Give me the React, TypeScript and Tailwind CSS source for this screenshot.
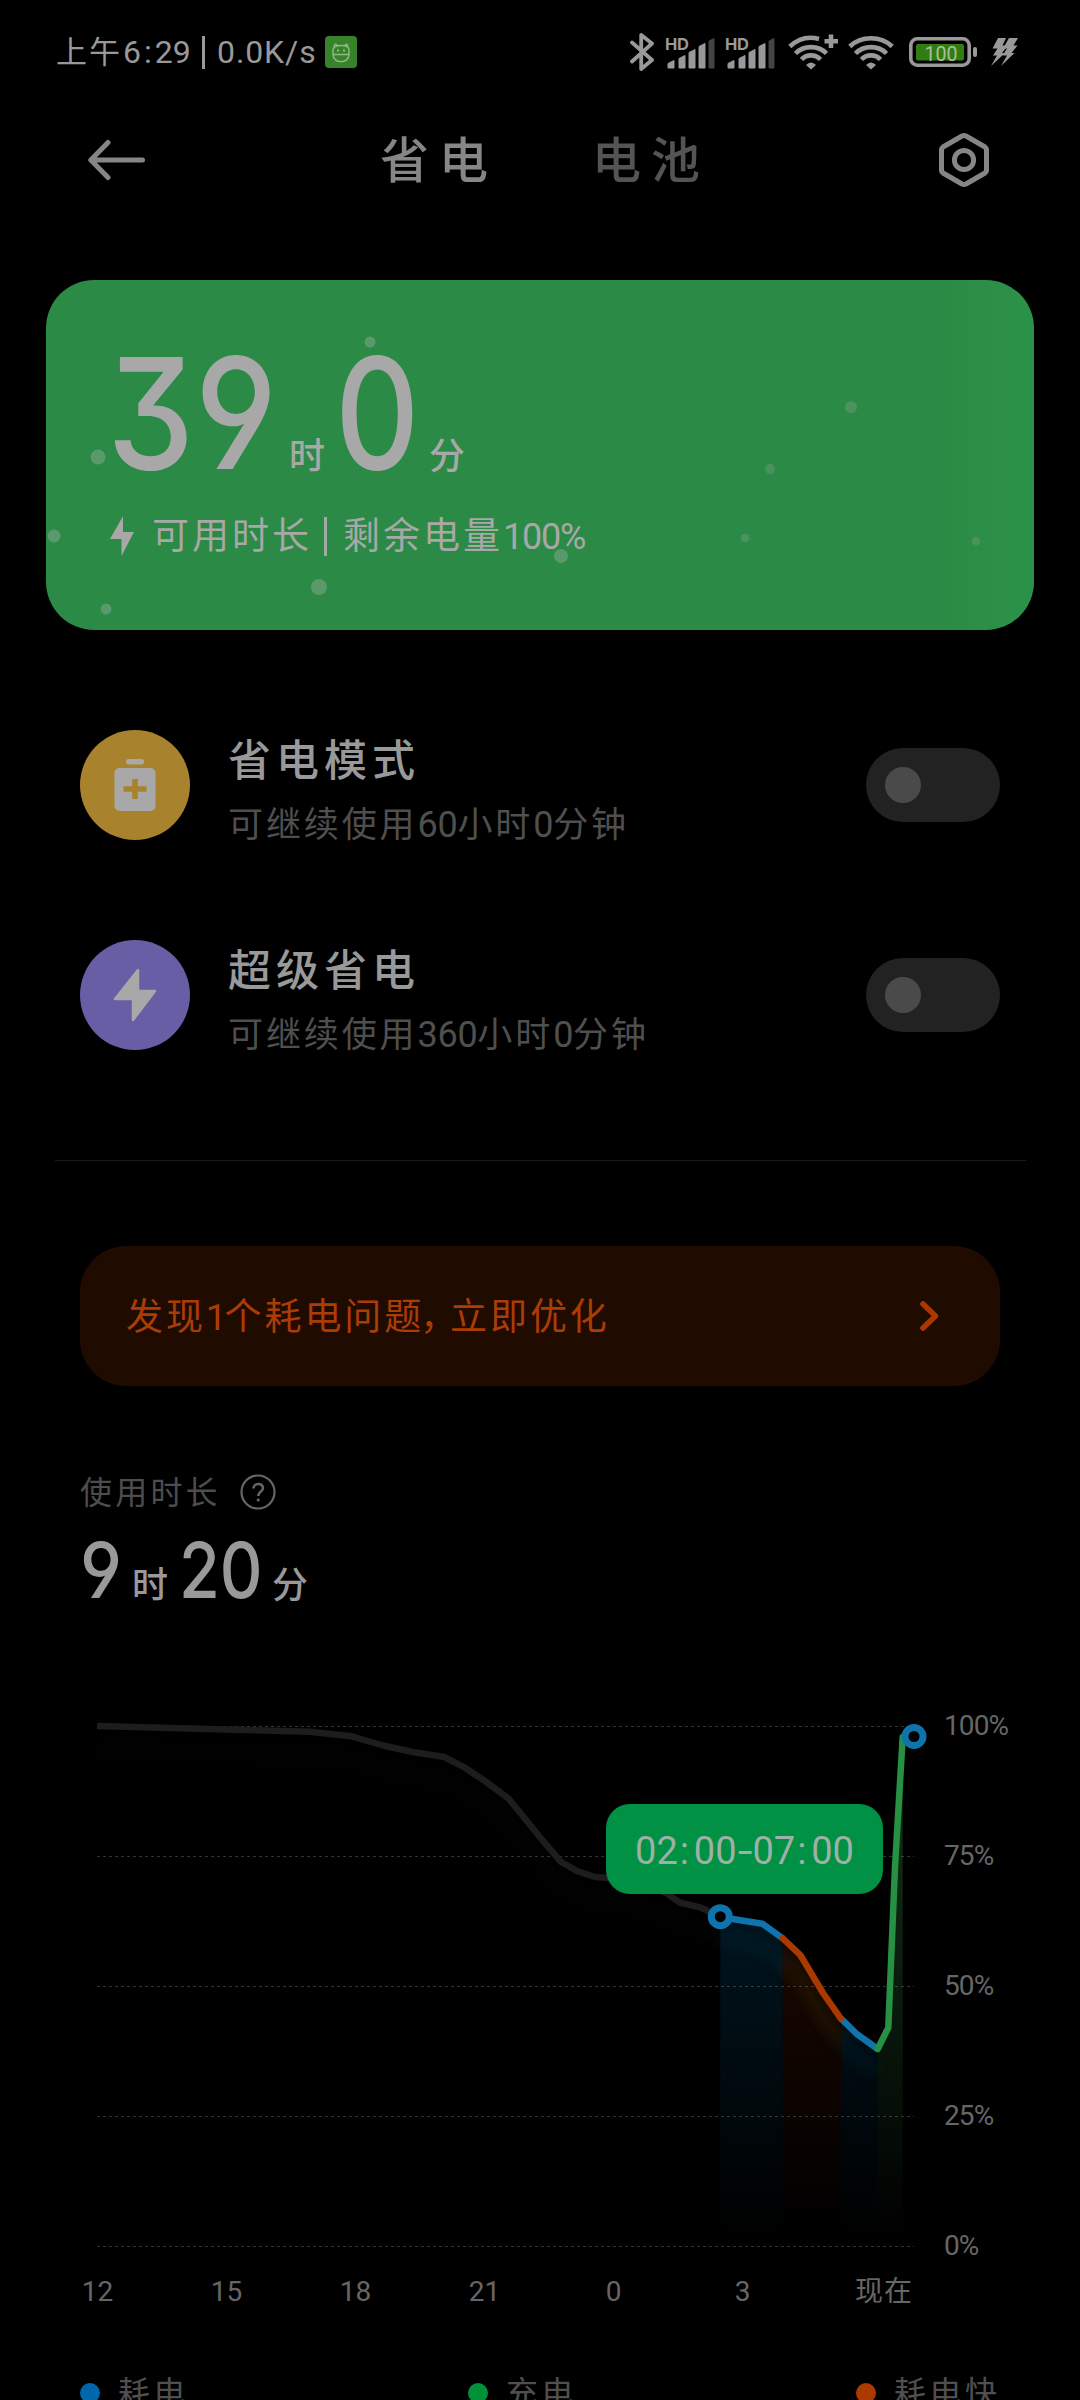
import { useState } from "react";

const MODES = [
  { id: "saver", title: "省电模式", hint: "可继续使用60小时0分钟" },
  { id: "ultra", title: "超级省电", hint: "可继续使用360小时0分钟" },
];

const LEGEND = [
  { label: "耗电", color: "bg-[#0068aa]" },
  { label: "充电", color: "bg-[#009139]" },
  { label: "耗电快", color: "bg-[#aa3a00]" },
];

const PERCENTS = ["100%", "75%", "50%", "25%", "0%"];
const HOURS = ["12", "15", "18", "21", "0", "3"];

// x, y, radius inside the green card
const BUBBLES = [
  [324, 62, 5.5],
  [52, 177, 7.5],
  [8, 256, 6.5],
  [273, 307, 8],
  [60, 329, 5.5],
  [515, 276, 7],
  [805, 127, 6],
  [724, 189, 5],
  [699, 258, 4.3],
  [930, 261, 4.3],
];

function Mixed({ text, latin }: { text: string; latin: string }) {
  return (
    <>
      {text.split(/([\d%]+)/).map((part, i) =>
        /^[\d%]+$/.test(part) ? (
          <span key={i} className={latin}>
            {part}
          </span>
        ) : (
          part
        )
      )}
    </>
  );
}

function Signal() {
  return (
    <svg className="overflow-visible" width="50" height="34" viewBox="0 0 50 34" fill="#999">
      <text x="0" y="15" fontSize="16.5" fontWeight="700" fontFamily="Inter, sans-serif" textLength="24">
        HD
      </text>
      <path d="M3 33V28.5L9 25.5V33z M14 33V23.5L20 20.5V33z M24 33V17.5L30 14.5V33z M34 33V11.5L40 8.5V33z" stroke="#999" strokeLinejoin="round" strokeWidth="1" />
      <path d="M44 33V6L49 3.5V33z" fill="#444" stroke="#444" strokeLinejoin="round" strokeWidth="1" />
    </svg>
  );
}

function Wifi({ plus = false }: { plus?: boolean }) {
  return (
    <svg width={plus ? 50 : 46} height="36" viewBox={plus ? "0 0 50 36" : "0 0 46 36"} fill="none" stroke="#999" strokeWidth="4.6">
      <path d={plus ? "M1.8 12.5Q15 0.5 31 5" : "M1.8 12.5C13 1.5 33 1.5 44.2 12.5"} />
      <path d="M7.5 19.5C15.5 11 30.5 11 38.5 19.5" />
      <path d="M13.5 25.5C18.5 20 27.5 20 32.5 25.5" />
      <path d="M18 31Q23 26 28 31L23 35.5z" fill="#999" stroke="none" />
      {plus && <path d="M43 0.5V14 M36.5 7.3H50" />}
    </svg>
  );
}

function StatusBar() {
  return (
    <div className="flex h-[104px] shrink-0 items-center pl-[56px] pr-[62px] text-[#999]">
      <div className="flex shrink-0 items-center text-[32px] leading-none">
        <span className="w-[67px] shrink-0 text-[31px] tracking-[2px]">上午</span>
        <span className="w-[79px] shrink-0">
          6<span className="px-[3px]">:</span>29
        </span>
        <span className="mr-[12px] h-[33px] w-[3px] shrink-0 bg-[#999]" />
        <span className="w-[108px] shrink-0 whitespace-nowrap tracking-[0.9px]">0.0K/s</span>
        <svg width="32" height="32" viewBox="0 0 32 32" fill="none" stroke="#93b98b" strokeWidth="1.4">
          <rect width="32" height="32" rx="4" fill="#36832a" stroke="none" />
          <path d="M8 18.5V14C8 11 11 9.5 16 9.5S24 11 24 14V18.5z M8 18.5C8 28 24 28 24 18.5 M9.5 11.5C8.5 8 11 7 12 9.7 M22.5 11.5C23.5 8 21 7 20 9.7" />
          <path d="M13 13.5v2 M19 13.5v2" strokeWidth="2" />
        </svg>
      </div>

      <div className="ml-auto flex items-center">
        <svg width="24" height="40" viewBox="0 0 24 40" fill="none" stroke="#999" strokeWidth="3.8" strokeLinejoin="round" strokeLinecap="round">
          <path d="M2 10.5L22 28L11.2 37V3L22 11.5L2 29.5" />
        </svg>
        <span className="w-[11px]" />
        <Signal />
        <span className="w-[10px]" />
        <Signal />
        <span className="w-[13px]" />
        <Wifi plus />
        <span className="w-[10px]" />
        <Wifi />
        <span className="w-[15px]" />
        <svg width="68" height="30" viewBox="0 0 68 30">
          <rect x="1.8" y="1.8" width="58.4" height="26.4" rx="6.5" fill="none" stroke="#999" strokeWidth="3.6" />
          <rect x="7" y="7" width="48" height="16.5" rx="2" fill="#327d10" />
          <rect x="64" y="10" width="4" height="10" rx="2" fill="#999" />
          <text x="15.5" y="23.5" fontSize="20.5" fill="#a8bfa0" fontFamily="Roboto, sans-serif" textLength="33" lengthAdjust="spacingAndGlyphs">
            100
          </text>
        </svg>
        <span className="w-[14px]" />
        <svg width="27" height="28" viewBox="0 0 27 28" fill="#999">
          <path d="M7 0H15L11.5 7.5H17L11 15H14L0 28L6 17.5H2L6.5 10.5H1.5z" />
          <path d="M18 0H27L22.5 7.5H26.5L20.5 15H23.5L10 28L16 17.5H11.5L16 10.5H12z" />
        </svg>
      </div>
    </div>
  );
}

function Header() {
  return (
    <div className="flex h-[112px] shrink-0 items-center pl-[88px] pr-[90px]">
      <svg width="57" height="42" viewBox="0 0 57 42" fill="none" stroke="#868686" strokeWidth="5" strokeLinecap="round" strokeLinejoin="round">
        <path d="M54.5 21H3 M20 3.5L2.8 21L20 38.5" />
      </svg>
      <div className="ml-[235px] flex whitespace-nowrap pt-[2px] text-[49px] font-medium leading-none tracking-[10px]">
        <span className="w-[212px] text-[#868686]">省电</span>
        <span className="text-[#545454]">电池</span>
      </div>
      <svg className="ml-auto" width="52" height="56" viewBox="0 0 52 56" fill="none" stroke="#868686" strokeWidth="5" strokeLinejoin="round">
        <path d="M26 3.5Q27 3.5 28 4L47 15Q48.5 16 48.5 17.5V38.5Q48.5 40 47 41L28 52Q26 53 24 52L5 41Q3.5 40 3.5 38.5V17.5Q3.5 16 5 15L24 4Q25 3.5 26 3.5z" />
        <circle cx="26" cy="28" r="9.6" />
      </svg>
    </div>
  );
}

function RuntimeCard() {
  return (
    <div className="relative mx-[46px] mt-[64px] h-[350px] shrink-0 overflow-hidden rounded-[48px] bg-linear-to-r from-[#2b8a45] from-90% to-[#2c9148] to-98% pl-[64px] pt-[71px] text-[#a8a8a8]">
      <svg className="absolute left-0 top-0" width="988" height="350">
        {BUBBLES.map(([cx, cy, r], i) => (
          <circle key={i} cx={cx} cy={cy} r={r} fill={i > 5 ? "#4a935f" : "#5a996b"} />
        ))}
      </svg>
      <div className="relative flex h-[124px] items-baseline font-['Inter','Noto_Sans_CJK_SC',sans-serif] leading-[124px]">
        <span className="-ml-[3px] w-[182px] origin-left scale-x-[0.9] text-[154px] font-[450] tracking-[1px] [font-feature-settings:'cv09','cv04']">39</span>
        <span className="w-[46px] text-[36px] font-medium">时</span>
        <span className="w-[94px] origin-left scale-x-[0.85] text-[154px] font-[450]">0</span>
        <span className="text-[36px] font-medium">分</span>
      </div>
      <div className="relative mt-[41px] flex h-[40px] items-center text-[37px] leading-none tracking-[3px]">
        <svg className="mr-[18px]" width="24" height="40" viewBox="0 0 24 40" fill="#a8a8a8">
          <path d="M13 0V16H24L11.5 40V23H0z" />
        </svg>
        <span className="w-[172px]">可用时长</span>
        <span className="mr-[16px] h-[39px] w-[3px] bg-[#a0aba3]" />
        <span>
          <Mixed text="剩余电量100%" latin="text-[36px] tracking-[-1.2px]" />
        </span>
      </div>
    </div>
  );
}

function ModeIcon({ id }: { id: string }) {
  if (id === "saver") {
    return (
      <svg width="110" height="110" viewBox="0 0 110 110">
        <circle cx="55" cy="55" r="55" fill="#a8822c" />
        <rect x="46" y="29" width="18" height="5.5" rx="2.5" fill="#a8a8a8" />
        <rect x="34.5" y="38" width="41" height="43" rx="5" fill="#a8a8a8" />
        <path d="M55 49V69 M43.5 59H66.5" stroke="#a8822c" strokeWidth="5.6" />
      </svg>
    );
  }
  return (
    <svg width="110" height="110" viewBox="0 0 110 110">
      <circle cx="55" cy="55" r="55" fill="#675ea6" />
      <path d="M58 30V51H75L53 80V59H35z" fill="#a8a8a8" stroke="#a8a8a8" strokeWidth="2.5" strokeLinejoin="round" />
    </svg>
  );
}

function ModeRow({ id, title, hint }: { id: string; title: string; hint: string }) {
  const [on, setOn] = useState(false);

  return (
    <div className="flex h-[210px] shrink-0 items-center px-[80px]">
      <ModeIcon id={id} />
      <div className="ml-[38px] pt-[17px]">
        <div className="text-[43px] font-medium leading-[60px] tracking-[5px] text-[#999]">{title}</div>
        <div className="mt-[4px] text-[35px] leading-[60px] tracking-[2.9px] text-[#4f4f4f]">
          <Mixed text={hint} latin="text-[36px] tracking-[-0.3px]" />
        </div>
      </div>
      <button
        onClick={() => setOn(!on)}
        className={`ml-auto flex h-[74px] w-[134px] items-center rounded-full px-[19px] ${on ? "justify-end bg-[#2b8a45]" : "bg-[#222]"}`}
      >
        <span className="size-[36px] rounded-full bg-[#4a4a4a]" />
      </button>
    </div>
  );
}

function UsageTime() {
  return (
    <div className="shrink-0 px-[80px] pt-[88px]">
      <div className="flex h-[36px] items-center">
        <span className="pt-[2px] text-[32px] leading-none tracking-[3.2px] text-[#4d4d4d]">使用时长</span>
        <svg className="ml-[19px]" width="36" height="36" viewBox="0 0 36 36" fill="none" stroke="#666" strokeWidth="2.2">
          <circle cx="18" cy="18" r="16.5" />
          <path d="M13.5 14.5C13.5 8.5 23 8.5 23 14.2C23 17.5 18.2 17.5 18.2 22" strokeWidth="2.6" />
          <circle cx="18.2" cy="26" r="1.6" fill="#666" stroke="none" />
        </svg>
      </div>
      <div className="mt-[24px] flex h-[72px] items-baseline font-['Inter','Noto_Sans_CJK_SC',sans-serif] leading-[72px] text-[#999]">
        <span className="w-[52px] origin-left scale-x-[0.92] text-[77px] font-[450] [font-feature-settings:'cv04']">9</span>
        <span className="w-[47px] text-[36px] font-medium">时</span>
        <span className="w-[93px] origin-left scale-x-[0.86] text-[77px] font-[450]">20</span>
        <span className="text-[36px] font-medium">分</span>
      </div>
    </div>
  );
}

const IDLE = "M17 26L230 31.7L271.7 36.3L305 46L334 52.3L364.3 57L384.3 67.3L406.7 82.3L428.3 98.3L461.7 139.3L480.7 161.7L497 171L515 177L545 179L586.7 193.3L600 202.7L620 207.3L640.3 217";
const DRAIN = "M640.3 217L682.3 223.7L702.7 238.3";
const FAST = "M702.7 238.3L720.3 255L743 293L760.7 318.3";
const DRAIN_END = "M760.7 318.3L776.7 334L797.7 349";
const CHARGE = "M797.7 349L808.3 327.7L815 166.7L822.7 37";

function Chart() {
  return (
    <div className="relative mt-[94px] ml-[80px] flex h-[560px] shrink-0">
      <svg className="shrink-0" width="850" height="560" viewBox="0 0 850 560" fill="none">
        <defs>
          <linearGradient id="drain" gradientUnits="userSpaceOnUse" x1="0" y1="210" x2="0" y2="540">
            <stop offset="0" stopColor="#00151f" />
            <stop offset="1" stopColor="#000" />
          </linearGradient>
          <linearGradient id="fast" gradientUnits="userSpaceOnUse" x1="0" y1="240" x2="0" y2="530">
            <stop offset="0" stopColor="#1a0800" />
            <stop offset="1" stopColor="#000" />
          </linearGradient>
          <linearGradient id="charge" gradientUnits="userSpaceOnUse" x1="0" y1="40" x2="0" y2="540">
            <stop offset="0" stopColor="#14351a" />
            <stop offset="1" stopColor="#000" />
          </linearGradient>
          <filter id="soft" x="-20%" y="-20%" width="140%" height="140%">
            <feGaussianBlur stdDeviation="7" />
          </filter>
        </defs>

        <path d="M640.3 217L682.3 223.7L702.7 238.3V546H640.3z M760.7 318.3L776.7 334L797.7 349V546H760.7z" fill="url(#drain)" />
        <path d="M702.7 238.3L720.3 255L743 293L760.7 318.3V546H702.7z" fill="url(#fast)" />
        <path d="M797.7 349L808.3 327.7L815 166.7L822.7 37V546H797.7z" fill="url(#charge)" />

        <g filter="url(#soft)" strokeWidth="12" transform="translate(0 23)">
          <path d={IDLE} stroke="#fff" opacity="0.012" />
          <path d={DRAIN} stroke="#0f74ab" opacity="0.09" />
          <path d={FAST} stroke="#4a4a10" opacity="0.2" />
          <path d={DRAIN_END} stroke="#0f74ab" opacity="0.09" />
        </g>

        {[0, 1, 2, 3, 4].map((i) => (
          <line key={i} x1="17" x2="834" y1={26.5 + i * 130} y2={26.5 + i * 130} stroke="#fff" strokeOpacity="0.2" strokeDasharray="3 3" />
        ))}

        <g strokeWidth="6.5" strokeLinejoin="round">
          <path d={IDLE} stroke="#1d1d1d" />
          <path d={DRAIN} stroke="#0f74ab" />
          <path d={DRAIN_END} stroke="#0f74ab" />
          <path d={FAST} stroke="#aa3900" strokeLinecap="round" />
          <path d={CHARGE} stroke="#269043" strokeLinecap="round" />
        </g>
        <circle cx="640.3" cy="216.7" r="9" fill="#000" stroke="#0f74ab" strokeWidth="7" />
        <circle cx="834" cy="36.5" r="9" fill="#000" stroke="#0f74ab" strokeWidth="7" />
      </svg>

      <div className="ml-[14px] mt-[10px] flex flex-col text-[28px] text-[#666]">
        {PERCENTS.map((p) => (
          <span key={p} className="h-[130px] shrink-0 leading-[32px] tracking-[-0.9px]">
            {p}
          </span>
        ))}
      </div>

      <div className="absolute left-[526px] top-[104px] flex h-[90px] w-[277px] items-center justify-center rounded-[24px] bg-[#009144] pt-[3px] text-[38px] leading-none text-[#9fb0a6]">
        <span>02</span>
        <span className="w-[16px] pl-[2px]">:</span>
        <span>00</span>
        <span className="w-[16px] scale-x-140 text-center">-</span>
        <span>07</span>
        <span className="w-[16px] pl-[2px]">:</span>
        <span>00</span>
      </div>
    </div>
  );
}

function HourAxis() {
  return (
    <div className="mt-[12px] flex h-[40px] shrink-0 items-center pl-[33px] text-[28px] leading-none text-[#666]">
      {HOURS.map((h) => (
        <span key={h} className="w-[129px] text-center">
          {h}
        </span>
      ))}
      <span className="ml-[48px] tracking-[1px]">现在</span>
    </div>
  );
}

export default function App() {
  return (
    <div className="flex h-[2400px] w-[1080px] flex-col overflow-hidden bg-black font-['Roboto','Noto_Sans_CJK_SC',sans-serif]">
      <StatusBar />
      <Header />
      <RuntimeCard />

      <div className="mt-[50px] shrink-0">
        {MODES.map((m) => (
          <ModeRow key={m.id} {...m} />
        ))}
      </div>

      <div className="ml-[55px] mr-[54px] mt-[60px] h-px shrink-0 bg-[#1a1a1a]" />

      <div className="mx-[80px] mt-[85px] flex h-[140px] shrink-0 items-center rounded-[46px] bg-[#1f0b00] pl-[46px] pr-[61px] text-[37px] leading-none tracking-[2.9px] text-[#aa3c05]">
        <span className="pt-[2px]">
          <Mixed text="发现1个耗电问题" latin="tracking-[-2px]" />
          <span className="-ml-[4px] tracking-[-7px]">，</span>立即优化
        </span>
        <svg className="ml-auto" width="19" height="32" viewBox="0 0 19 32" fill="none" stroke="#aa3900" strokeWidth="5.5" strokeLinecap="round" strokeLinejoin="round">
          <path d="M3 4L15.5 16L3 28" />
        </svg>
      </div>

      <UsageTime />
      <Chart />
      <HourAxis />

      {/* Legend runs off the bottom of the screen */}
      <div className="mt-[57px] flex shrink-0 pl-[80px] text-[32px] leading-[48px] tracking-[3.5px] text-[#4f4f4f]">
        {LEGEND.map((l) => (
          <div key={l.label} className="flex w-[388px] shrink-0 items-center">
            <span className={`mr-[18px] size-[20px] rounded-full ${l.color}`} />
            {l.label}
          </div>
        ))}
      </div>
    </div>
  );
}
